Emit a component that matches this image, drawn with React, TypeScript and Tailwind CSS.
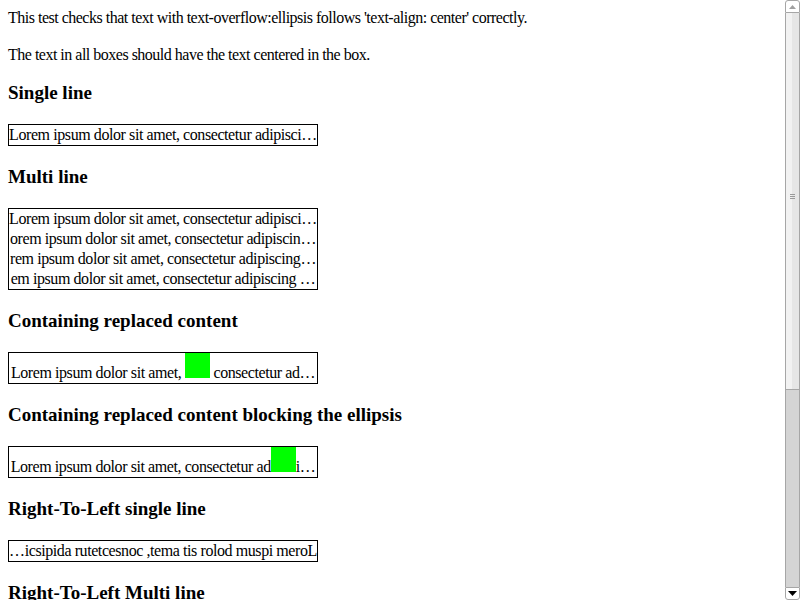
import React from "react";

const Box = ({ children }: { children: React.ReactNode }) => (
  <div className="mt-[18.72px] w-[310px] border border-black overflow-hidden whitespace-nowrap text-center tracking-[-0.42px]">
    {children}
  </div>
);

const Heading = ({ children, first = false }: { children: React.ReactNode; first?: boolean }) => (
  <h3
    className={
      (first ? "mt-[16.22px] mb-[-0.5px]" : "mt-[18.72px]") +
      " text-[19px] leading-[24.56px] font-bold tracking-normal whitespace-nowrap"
    }
  >
    {children}
  </h3>
);

const Green = () => <span className="inline-block w-[25px] h-[25px] bg-[#00ff00] align-baseline" />;

const Line = ({ children }: { children: React.ReactNode }) => (
  <div className="overflow-hidden whitespace-nowrap">{children}</div>
);

const Scrollbar = () => (
  <div className="w-[15px] shrink-0 h-[600px] flex flex-col bg-white">
    <div className="h-[13px] shrink-0 border border-[#a6a6a6] rounded-t-[3px] bg-white flex items-center justify-center">
      <svg width="7" height="4" viewBox="0 0 7 4">
        <polygon points="0,4 7,4 3.5,0" fill="#a0a0a0" />
      </svg>
    </div>
    <div className="h-[377px] shrink-0 border-x border-b border-[#a6a6a6] flex relative">
      <div className="w-[6px] bg-[#f2f2f2]" />
      <div className="flex-1 bg-[#e6e6e6]" />
      <div className="absolute left-[4px] top-[181px] w-[5px] flex flex-col gap-[1px]">
        <div className="h-[1px] bg-[#9a9a9a]" />
        <div className="h-[1px] bg-[#9a9a9a]" />
        <div className="h-[1px] bg-[#9a9a9a]" />
      </div>
    </div>
    <div className="flex-1 bg-[#d4d4d4] border-x border-[#a6a6a6]" />
    <div className="h-[13px] shrink-0 border border-[#a6a6a6] rounded-b-[3px] bg-white flex items-center justify-center">
      <svg width="9" height="5" viewBox="0 0 9 5">
        <polygon points="0,0 9,0 4.5,5" fill="#000000" />
      </svg>
    </div>
  </div>
);

export default function App() {
  return (
    <div className="flex h-[600px] overflow-hidden bg-white">
      <div className="flex-1 min-w-0 overflow-hidden text-black px-2 pt-2 font-['Liberation_Serif',serif] text-[16px] leading-[20px] tracking-[-0.5px]">
        <p className="whitespace-nowrap">
          This test checks that text with text-overflow:ellipsis follows 'text-align: center' correctly.
        </p>
        <p className="mt-[17px] whitespace-nowrap">The text in all boxes should have the text centered in the box.</p>

        <Heading first>Single line</Heading>
        <Box>
          <Line>Lorem ipsum dolor sit amet, consectetur adipisci…</Line>
        </Box>

        <Heading>Multi line</Heading>
        <Box>
          <Line>Lorem ipsum dolor sit amet, consectetur adipisci…</Line>
          <Line>orem ipsum dolor sit amet, consectetur adipiscin…</Line>
          <Line>rem ipsum dolor sit amet, consectetur adipiscing…</Line>
          <Line>em ipsum dolor sit amet, consectetur adipiscing …</Line>
        </Box>

        <Heading>Containing replaced content</Heading>
        <Box>
          <Line>
            Lorem ipsum dolor sit amet, <Green /> consectetur ad…
          </Line>
        </Box>

        <Heading>Containing replaced content blocking the ellipsis</Heading>
        <Box>
          <Line>
            Lorem ipsum dolor sit amet, consectetur ad<Green />i…
          </Line>
        </Box>

        <Heading>Right-To-Left single line</Heading>
        <Box>
          <Line>…icsipida rutetcesnoc ,tema tis rolod muspi meroL</Line>
        </Box>

        <Heading>Right-To-Left Multi line</Heading>
        <Box>
          <Line>…icsipida rutetcesnoc ,tema tis rolod muspi meroL</Line>
          <Line>…nicsipida rutetcesnoc ,tema tis rolod muspi mero</Line>
          <Line>…gnicsipida rutetcesnoc ,tema tis rolod muspi mer</Line>
          <Line>… gnicsipida rutetcesnoc ,tema tis rolod muspi me</Line>
        </Box>
      </div>
      <Scrollbar />
    </div>
  );
}
